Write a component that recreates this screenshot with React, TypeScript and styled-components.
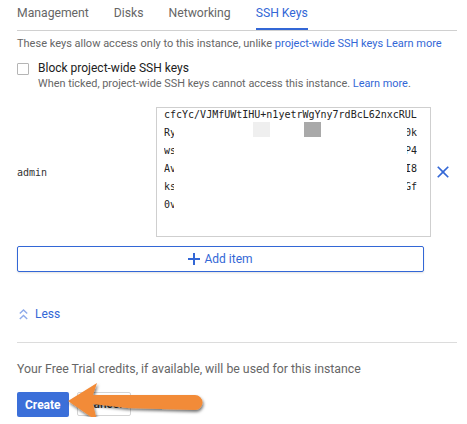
import React from "react";
import styled, { createGlobalStyle } from "styled-components";

const GlobalStyle = createGlobalStyle`
  html, body { margin: 0; padding: 0; background: #ffffff; }
  body { font-family: Roboto, "Noto Sans", Arial, sans-serif; -webkit-font-smoothing: antialiased; }
`;

const BLUE = "#3367d6";

const Page = styled.div`
  width: 440px;
  padding-left: 17px;
  color: #666;
`;

const TabBar = styled.div`
  display: flex;
  gap: 25px;
  border-bottom: 1px solid #d0d0d0;
`;

const Tab = styled.div<{ $active?: boolean }>`
  font-size: 12.2px;
  line-height: 15px;
  padding: 6px 0 7px;
  color: ${(p) => (p.$active ? BLUE : "#666")};
  border-bottom: 2px solid ${(p) => (p.$active ? BLUE : "transparent")};
`;

const Intro = styled.p`
  margin: 5px 0 0;
  font-size: 11px;
  line-height: 16px;
  color: #666;
`;

const Link = styled.span`
  color: ${BLUE};
`;

const CheckRow = styled.div`
  display: flex;
  align-items: flex-start;
  gap: 9px;
  margin-top: 11px;
`;

const Checkbox = styled.span`
  width: 10px;
  height: 10px;
  border: 1px solid #b5b5b5;
  border-radius: 1px;
  flex: none;
`;

const CheckText = styled.div`
  display: flex;
  flex-direction: column;
`;

const CheckLabel = styled.div`
  font-size: 12px;
  line-height: 15px;
  color: #212121;
  margin-top: -2px;
`;

const Hint = styled.div`
  font-size: 10.9px;
  line-height: 16px;
  color: #666;
`;

const KeyRow = styled.div`
  display: flex;
  align-items: center;
  margin-top: 15px;
`;

const UserLabel = styled.div`
  width: 139px;
  flex: none;
  padding-top: 1px;
  font-family: "DejaVu Sans Mono", monospace;
  font-size: 10px;
  color: #333;
`;

const KeyBox = styled.div`
  position: relative;
  width: 266px;
  height: 128px;
  border: 1px solid #cfcfcf;
  overflow: hidden;
  flex: none;
  padding-left: 7px;
  box-sizing: content-box;
  font-family: "DejaVu Sans Mono", monospace;
  font-size: 10px;
  line-height: 18px;
  color: #222;
`;

const KeyLines = styled.div`
  margin-top: -2px;
  width: 253px;
`;

const KeyLine = styled.div`
  display: flex;
  justify-content: space-between;
  height: 18px;
  white-space: pre;
`;

const ClipStart = styled.span`
  width: 10px;
  overflow: hidden;
`;

const ClipEnd = styled.span`
  display: flex;
  justify-content: flex-end;
  width: 10px;
  overflow: hidden;
`;

const Smudge = styled.div<{ $tone: string }>`
  position: absolute;
  top: 14px;
  width: 17px;
  height: 15px;
  background: ${(p) => p.$tone};
`;

const RemoveButton = styled.button`
  display: flex;
  margin-left: 2px;
  padding: 0;
  border: 0;
  background: none;
  color: ${BLUE};
`;

const AddButton = styled.button`
  display: flex;
  align-items: center;
  justify-content: center;
  gap: 4px;
  width: 407px;
  height: 26px;
  margin-top: 9px;
  padding: 0;
  border: 1px solid ${BLUE};
  border-radius: 2px;
  background: #fff;
  box-shadow: 0 1px 2px rgba(0, 0, 0, 0.12);
  font-family: Roboto, Arial, sans-serif;
  font-size: 12px;
  color: ${BLUE};
`;

const LessToggle = styled.div`
  display: flex;
  align-items: center;
  gap: 7px;
  margin-top: 34px;
  padding-left: 2px;
  font-size: 12px;
  line-height: 16px;
  color: ${BLUE};
`;

const Divider = styled.hr`
  margin: 20px 0 0;
  border: 0;
  border-top: 1px solid #dcdcdc;
`;

const Note = styled.p`
  margin: 18px 0 0;
  font-size: 12.3px;
  line-height: 16px;
  color: #666;
`;

const Actions = styled.div`
  position: relative;
  display: flex;
  gap: 8px;
  margin-top: 15px;
`;

const PrimaryButton = styled.button`
  height: 25px;
  padding: 0 8px;
  border: 0;
  border-radius: 2px;
  background: #3b6fd9;
  color: #fff;
  font-family: Roboto, Arial, sans-serif;
  font-size: 12px;
  font-weight: 700;
`;

const SecondaryButton = styled.button`
  height: 24px;
  padding: 0 8px;
  border: 1px solid #d4d4d4;
  border-radius: 2px;
  background: #fff;
  color: #333;
  font-family: Roboto, Arial, sans-serif;
  font-size: 12px;
  font-weight: 500;
`;

const ArrowOverlay = styled.svg`
  position: absolute;
  left: 50px;
  top: -12px;
  overflow: visible;
`;

const keyLines: Array<[string, string]> = [
  ["Ry", "0k"],
  ["ws", "P4"],
  ["Av", "I8"],
  ["ks", "Gf"],
  ["0v", ""],
];

export default function App() {
  return (
    <>
      <GlobalStyle />
      <Page>
        <TabBar>
          <Tab>Management</Tab>
          <Tab>Disks</Tab>
          <Tab>Networking</Tab>
          <Tab $active>SSH Keys</Tab>
        </TabBar>
        <Intro>
          These keys allow access only to this instance, unlike{" "}
          <Link>project-wide SSH keys</Link> <Link>Learn more</Link>
        </Intro>
        <CheckRow>
          <Checkbox />
          <CheckText>
            <CheckLabel>Block project-wide SSH keys</CheckLabel>
            <Hint>
              When ticked, project-wide SSH keys cannot access this instance.{" "}
              <Link>Learn more</Link>.
            </Hint>
          </CheckText>
        </CheckRow>
        <KeyRow>
          <UserLabel>admin</UserLabel>
          <KeyBox>
            <KeyLines>
              <KeyLine>cfcYc/VJMfUWtIHU+n1yetrWgYny7rdBcL62nxcRUL</KeyLine>
              {keyLines.map(([start, end], i) => (
                <KeyLine key={i}>
                  <ClipStart>{start}</ClipStart>
                  <ClipEnd>{end}</ClipEnd>
                </KeyLine>
              ))}
            </KeyLines>
            <Smudge $tone="#efefef" style={{ left: 96 }} />
            <Smudge $tone="#a9a9a9" style={{ left: 147 }} />
          </KeyBox>
          <RemoveButton aria-label="Remove">
            <svg width="20" height="20" viewBox="0 0 24 24" fill="currentColor">
              <path d="M19 6.41L17.59 5 12 10.59 6.41 5 5 6.41 10.59 12 5 17.59 6.41 19 12 13.41 17.59 19 19 17.59 13.41 12z" />
            </svg>
          </RemoveButton>
        </KeyRow>
        <AddButton>
          <svg width="12" height="12" viewBox="0 0 12 12" fill="currentColor">
            <rect x="0" y="5" width="12" height="2" />
            <rect x="5" y="0" width="2" height="12" />
          </svg>
          Add item
        </AddButton>
        <LessToggle>
          <svg width="9" height="11" viewBox="0 0 9 11" fill="none" stroke="#8eaaea" strokeWidth="1.4">
            <polyline points="0.8,4.5 4.5,1 8.2,4.5" />
            <polyline points="0.8,10 4.5,6.5 8.2,10" />
          </svg>
          Less
        </LessToggle>
        <Divider />
        <Note>Your Free Trial credits, if available, will be used for this instance</Note>
        <Actions>
          <PrimaryButton>Create</PrimaryButton>
          <SecondaryButton>Cancel</SecondaryButton>
          <ArrowOverlay width="150" height="46" viewBox="0 0 150 46">
            <defs>
              <filter id="arrowShadow" x="-20%" y="-30%" width="140%" height="170%">
                <feDropShadow dx="1" dy="2" stdDeviation="1.6" floodColor="#000" floodOpacity="0.55" />
              </filter>
            </defs>
            <path
              d="M1 21 L30 3 L26 15 L128 15 A7.5 7.5 0 0 1 128 30 L60 28 L26 24 L30 41 Z"
              fill="#f28b38"
              filter="url(#arrowShadow)"
            />
          </ArrowOverlay>
        </Actions>
      </Page>
    </>
  );
}
